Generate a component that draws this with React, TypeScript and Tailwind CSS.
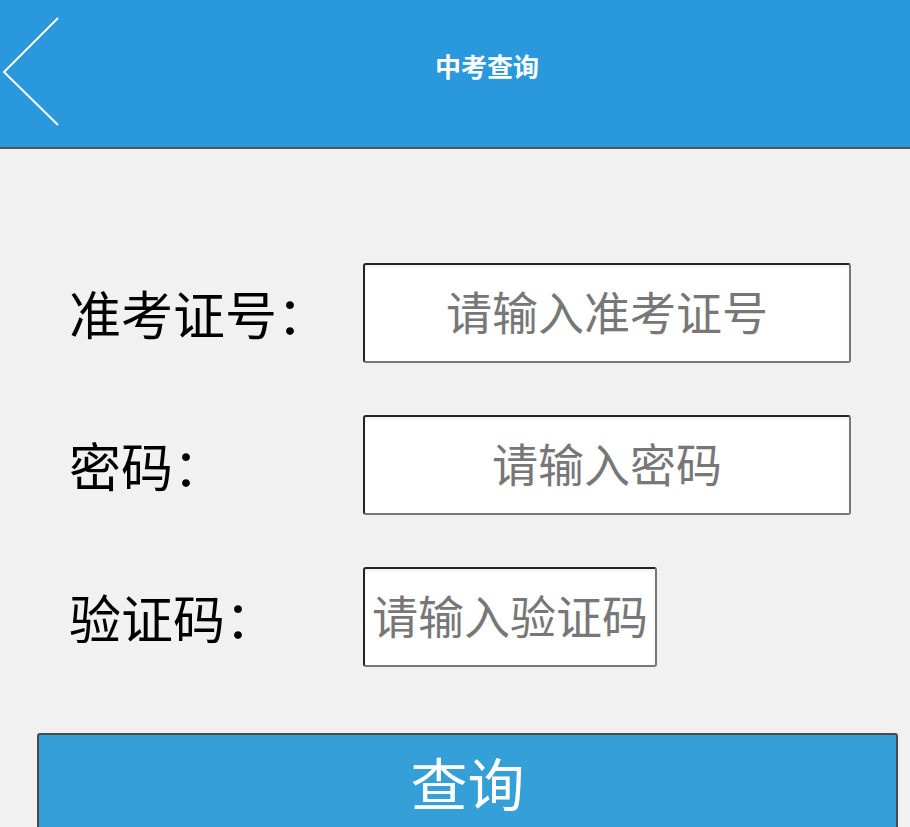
import React from 'react';

const font = { fontFamily: '"Noto Sans CJK SC", "Noto Sans", sans-serif' };

const fields = [
  { label: '准考证号：', placeholder: '请输入准考证号', width: 'w-[488px]' },
  { label: '密码：', placeholder: '请输入密码', width: 'w-[488px]' },
  { label: '验证码：', placeholder: '请输入验证码', width: 'w-[294px]' },
];

export default function App() {
  return (
    <div className="w-[910px] h-[827px] overflow-hidden bg-[#f1f1f1]" style={font}>
      {/* Header */}
      <div className="h-[149px] bg-[#2a98dc] border-b-2 border-[#555] flex">
        <button className="w-[64px] h-full flex items-center justify-start" aria-label="返回">
          <svg width="64" height="147" viewBox="0 0 64 147" fill="none">
            <polyline points="58,18 4,72 58,125" stroke="#fff" strokeWidth="2" />
          </svg>
        </button>
        <div className="flex-1 flex items-center justify-center pb-[16px]">
          <h1 className="text-white text-[26px] font-bold leading-none">中考查询</h1>
        </div>
      </div>

      {/* Form */}
      <div className="pt-[114px] pl-[69px] flex flex-col gap-[52px]">
        {fields.map((f) => (
          <div key={f.label} className="flex items-center h-[100px]">
            <label className="w-[294px] text-[52px] leading-none text-black">{f.label}</label>
            <input
              type="text"
              placeholder={f.placeholder}
              className={`${f.width} h-[100px] pb-[6px] bg-white border-2 border-t-[#222] border-l-[#222] border-r-[#777] border-b-[#777] rounded-[3px] text-center text-[46px] text-[#444] placeholder:text-[#777] shadow-[inset_0_2px_3px_rgba(0,0,0,0.06)] outline-none`}
            />
          </div>
        ))}
      </div>

      {/* Submit */}
      <div className="pt-[66px] pl-[37px] pr-[12px]">
        <button className="w-full h-[120px] bg-[#359fd8] border-2 border-[#4a4a4a] rounded-t-[3px] text-white text-[57px] leading-none flex justify-center pt-[18px]">
          查询
        </button>
      </div>
    </div>
  );
}
